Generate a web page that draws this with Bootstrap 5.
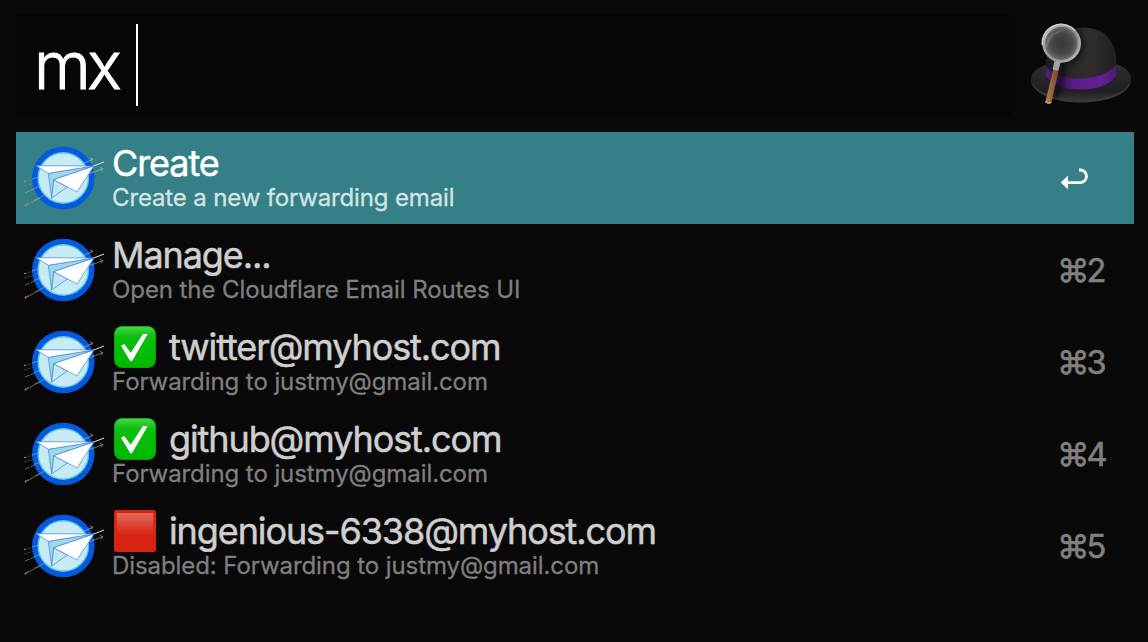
<!DOCTYPE html>
<html lang="en">
<head>
<meta charset="utf-8">
<meta name="viewport" content="width=device-width, initial-scale=1">
<title>mx</title>
<link href="https://cdn.jsdelivr.net/npm/bootstrap@5.3.0/dist/css/bootstrap.min.css" rel="stylesheet">
<style>
body{background:#090909;font-family:Inter,"Liberation Sans",sans-serif;height:642px;overflow:hidden;color:#cfcfcf}
.query{margin:14px 0 0 16px;width:994px;height:102px;background:#060606;color:#fff;font-size:65px;font-weight:300;line-height:102px;padding-left:18px}
.query-text{letter-spacing:-3.4px;width:102px;padding-top:2px;-webkit-text-stroke:1px}
.caret{width:2px;height:82px;background:#fff}
.hat{width:138px;height:125px}
.results{margin:7px 14px 0 16px}
.result{height:92px;padding:0 0 0 8px}
.result.selected{background:#348086;color:#fff}
.thumb{width:80px;height:80px;margin-right:8px}
.title{font-size:36px;line-height:44px;height:44px;white-space:nowrap;margin-top:9px;color:inherit;letter-spacing:-1.1px;-webkit-text-stroke:.5px}
.desc{font-size:24px;line-height:28px;white-space:nowrap;margin-top:-1px;color:#7f7f7f;letter-spacing:-.08px;-webkit-text-stroke:.3px}
.selected .desc{color:#d3e4e6;letter-spacing:-.14px}
.mark-icon{width:42px;height:42px;margin:1px 13px 0 2px}
.key{width:77px;padding:2px 2px 0 0;font-size:32.5px;line-height:40px;color:#7f7f7f;white-space:nowrap;letter-spacing:-3px;-webkit-text-stroke:.6px}
.key svg{display:block;margin:0 0 0 3px}
</style>
<script src="https://cdn.jsdelivr.net/npm/bootstrap@5.3.0/dist/js/bootstrap.bundle.min.js"></script>
</head>
<body>
<svg width="0" height="0" class="position-absolute" aria-hidden="true">
<defs>
<linearGradient id="green" x2="0" y2="1"><stop offset="0" stop-color="#4bd34b"/><stop offset=".25" stop-color="#0abf0d"/><stop offset="1" stop-color="#00b800"/></linearGradient>
<linearGradient id="red" x2="0" y2="1"><stop offset="0" stop-color="#e46a5c"/><stop offset="1" stop-color="#d72312"/></linearGradient>
<symbol id="plane" viewBox="0 0 80 80">
<g fill="none" stroke="#9bb3b9" stroke-width=".9" opacity=".6">
<path d="M0 43.7 11 40.5M0 48l10-3" stroke-dasharray="3 1" opacity=".6"/><path d="M1 55 15 49M1 67.7 20 58" stroke-dasharray="5 1"/></g>
<circle cx="39.3" cy="40" r="31.3" fill="#0459de"/>
<circle cx="39.3" cy="40" r="25.2" fill="#c6ebf4" stroke="#58c5e0" stroke-width="1.4"/>
<g fill="none" stroke="#b4cbd2" stroke-width="1"><path d="M56 27 68 21.5M66 20l3 1-2 2.5M63 36.5 78 31M76 29.5l3 1.3-2 2.7" opacity=".55"/><path d="m69 28.3 11-4.3" stroke="#d7e5e8"/><path d="M10 62.5 20 57.5M10 50.5l5-2M8 41l5-1.5" opacity=".45"/></g>
<g stroke="#4384d5" stroke-width=".7" stroke-linejoin="round">
<path d="M24.3 35.3 69.7 28 29.7 41.7 27.7 60Z" fill="#9bd9e9"/>
<path d="M29.7 41.7 43.3 49 27.7 60Z" fill="#c0e8f2"/>
<path d="M12 27.7 69.7 28 24.3 35.3Z" fill="#fff"/>
<path d="M29.7 41.7 70 28 53 54Z" fill="#fff"/></g>
<g fill="#e98928"><circle cx=".9" cy="43.5" r=".8"/><circle cx="1.5" cy="67.5" r=".9"/><circle cx="4" cy="66.2" r=".7"/><circle cx="6.5" cy="65" r=".6" fill="#e0532d"/></g>
</symbol>
<symbol id="on" viewBox="0 0 42 42"><rect width="42" height="42" rx="8" fill="#079b0a"/><rect x=".7" y=".7" width="40.6" height="40.6" rx="7.5" fill="url(#green)"/><path d="M7 19.7 10.3 18 16.7 26.7 29 8h4.7L18 35.3h-1.7Z" fill="#fff"/></symbol>
<symbol id="off" viewBox="0 0 42 42"><rect width="42" height="42" rx="2.5" fill="#d72312"/><path d="M2.7 3h36.6v22H2.7Z" fill="url(#red)"/></symbol>
</defs>
</svg>
<header class="d-flex">
<div class="query d-flex align-items-center"><span class="query-text">mx</span><span class="caret"></span></div>
<svg class="hat" viewBox="6 0 414 375">
<defs>
<linearGradient id="crown" x1="0" x2="1"><stop offset="0" stop-color="#1d1b1d"/><stop offset=".6" stop-color="#302d2f"/><stop offset="1" stop-color="#211f21"/></linearGradient>
<linearGradient id="brim" x2="0" y2="1"><stop offset="0" stop-color="#302e30"/><stop offset=".7" stop-color="#211f21"/><stop offset="1" stop-color="#393839"/></linearGradient>
<linearGradient id="band"><stop offset="0" stop-color="#53207c"/><stop offset=".25" stop-color="#3c155d"/><stop offset=".4" stop-color="#5b1d89"/><stop offset=".8" stop-color="#622093"/><stop offset="1" stop-color="#481b6e"/></linearGradient>
<radialGradient id="lens"><stop offset="0" stop-color="#353535"/><stop offset=".6" stop-color="#484848"/><stop offset="1" stop-color="#737373"/></radialGradient>
<linearGradient id="rim" x2="1" y2="1"><stop offset="0" stop-color="#d4d5d6"/><stop offset=".5" stop-color="#8e9092"/><stop offset="1" stop-color="#bbbdbe"/></linearGradient>
<linearGradient id="wood"><stop offset="0" stop-color="#b58050"/><stop offset="1" stop-color="#744829"/></linearGradient>
<filter id="soft" x="-50%" y="-20%" width="200%" height="140%"><feGaussianBlur stdDeviation="6"/></filter>
</defs>
<path d="M69 236c2-22 28-39 65-46h180c35 8 55 26 55 47 0 43-67 70-150 70S69 279 69 236Z" fill="url(#brim)"/>
<path d="M69 237c4 38 69 62 150 62s144-23 150-61c0 42-67 69-150 69S68 279 69 237Z" fill="#3a393a"/>
<path d="M114 238V170c0-56 54-87 117-87 62 0 93 44 94 103v52c-35 38-173 43-211 0Z" fill="url(#crown)"/>
<path d="M113 199c43 50 165 50 212-4l-1 33c-33 52-163 55-210 2Z" fill="url(#band)"/>
<g filter="url(#soft)" opacity=".55"><circle cx="172" cy="135" r="51" fill="none" stroke="#000" stroke-width="12"/><path d="m170 190-28 105" stroke="#000" stroke-width="16"/></g>
<path d="M137 205h16l-23 104c-4 4-15 2-18-3Z" fill="url(#wood)"/><path d="M113 303c5 4 12 5 18 2l-1 4c-4 4-16 2-19-3Z" fill="#bba58d"/>
<path d="m139 184 19 3-7 24c-5 1-13 0-17-3Z" fill="#a3a5a6"/>
<circle cx="161" cy="130" r="54" fill="url(#lens)" stroke="url(#rim)" stroke-width="8"/>
<circle cx="157" cy="130" r="52" fill="none" stroke="#9a9c9d" stroke-width="2"/>
<path d="M112 140c2-33 28-48 59-49-30 8-44 22-51 49Z" fill="#aaa" opacity=".25"/>
<path d="M103 135a56 56 0 0 1 98-43" fill="none" stroke="#d0d1d2" stroke-width="4"/>
</svg>
</header>
<main class="results">
<div class="result selected d-flex align-items-center"><svg class="thumb"><use href="#plane"/></svg><div class="flex-grow-1 align-self-start"><div class="title">Create</div><div class="desc">Create a new forwarding email</div></div><div class="key"><svg width="28" height="24" viewBox="0 0 28 24"><path d="M19 3h1.2a5.6 5.6 0 0 1 0 12.6H7" fill="none" stroke="#fff" stroke-width="2.8"/><path d="M.7 15.5 8 8.8v13.6Z" fill="#fff"/></svg></div></div>
<div class="result d-flex align-items-center"><svg class="thumb"><use href="#plane"/></svg><div class="flex-grow-1 align-self-start"><div class="title">Manage...</div><div class="desc">Open the Cloudflare Email Routes UI</div></div><div class="key">⌘2</div></div>
<div class="result d-flex align-items-center"><svg class="thumb"><use href="#plane"/></svg><div class="flex-grow-1 align-self-start"><div class="title d-flex"><svg class="mark-icon"><use href="#on"/></svg><span>twitter@myhost.com</span></div><div class="desc">Forwarding to justmy@gmail.com</div></div><div class="key">⌘3</div></div>
<div class="result d-flex align-items-center"><svg class="thumb"><use href="#plane"/></svg><div class="flex-grow-1 align-self-start"><div class="title d-flex"><svg class="mark-icon"><use href="#on"/></svg><span>github@myhost.com</span></div><div class="desc">Forwarding to justmy@gmail.com</div></div><div class="key">⌘4</div></div>
<div class="result d-flex align-items-center"><svg class="thumb"><use href="#plane"/></svg><div class="flex-grow-1 align-self-start"><div class="title d-flex"><svg class="mark-icon"><use href="#off"/></svg><span>ingenious-6338@myhost.com</span></div><div class="desc">Disabled: Forwarding to justmy@gmail.com</div></div><div class="key">⌘5</div></div>
</main>
</body>
</html>
